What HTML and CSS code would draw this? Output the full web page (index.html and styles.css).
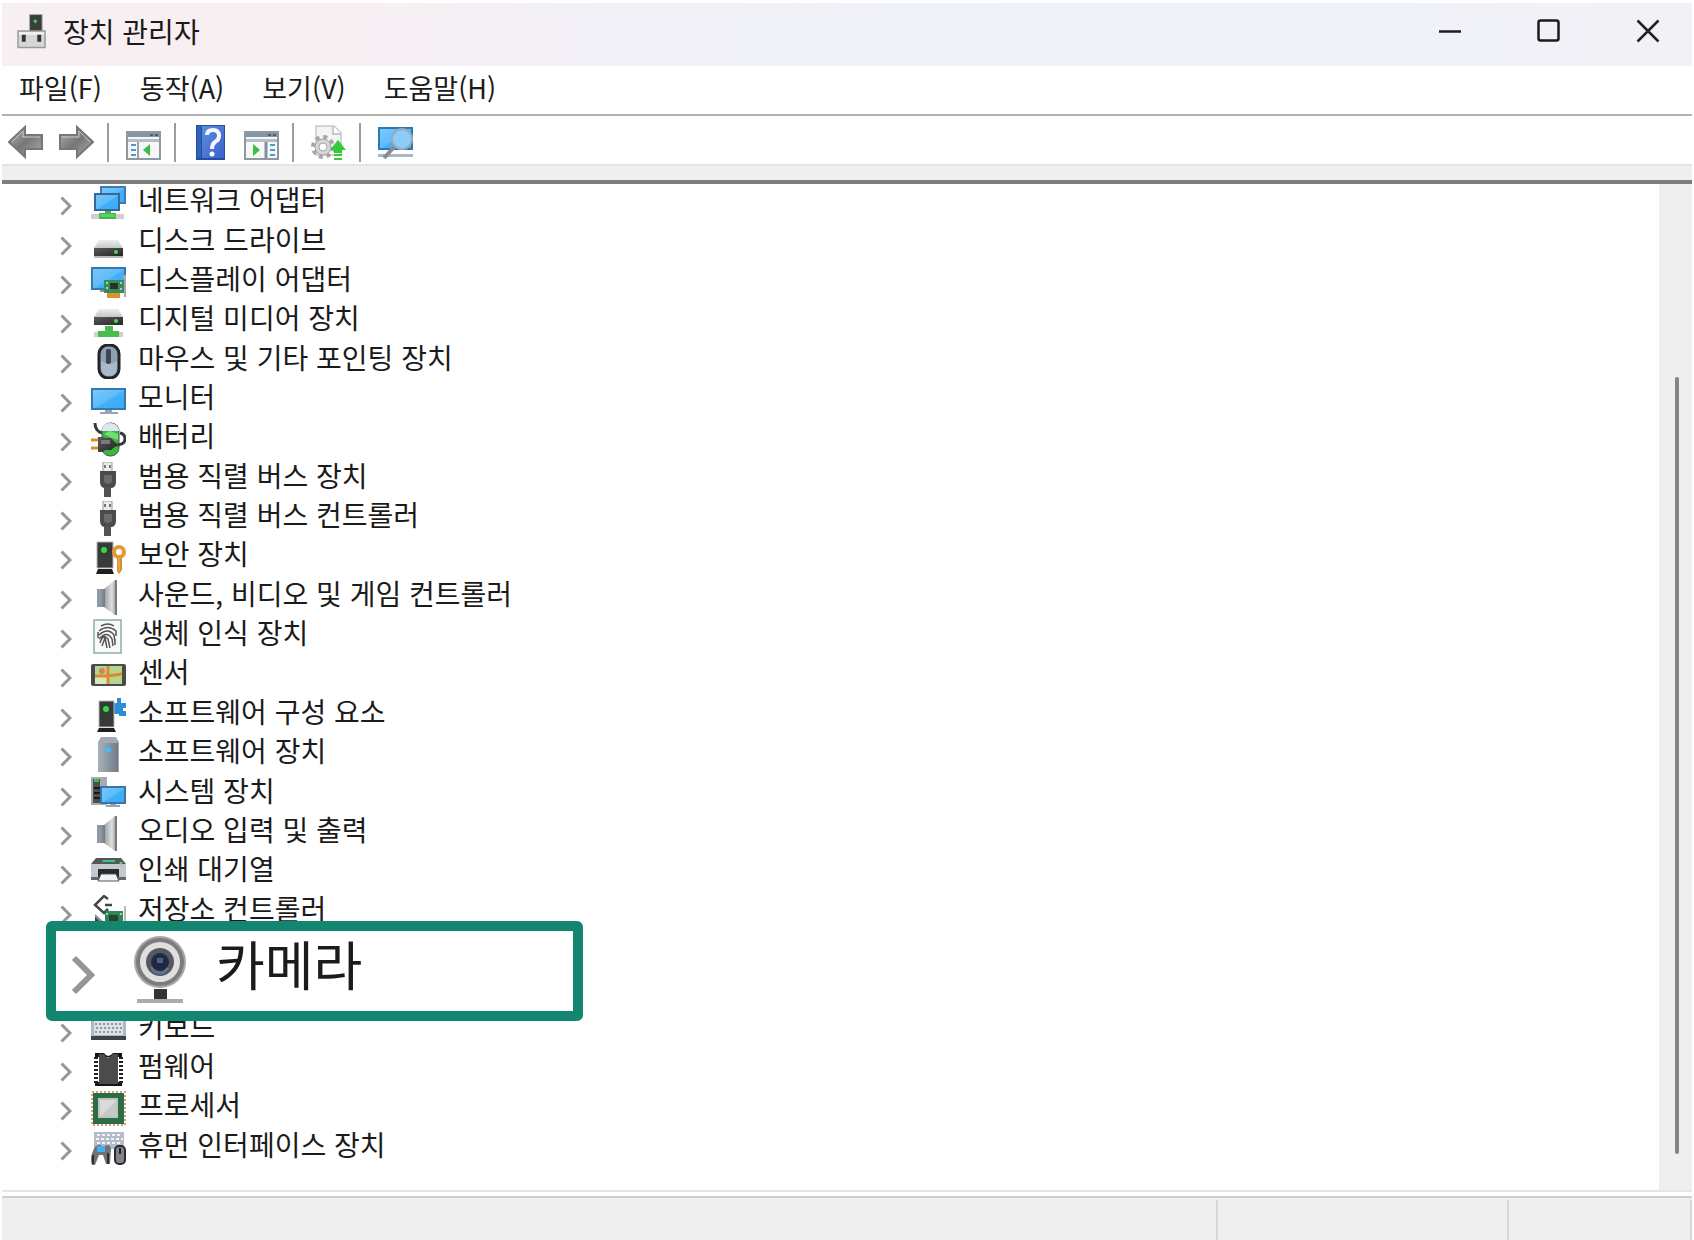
FILE: index.html
```html
<!DOCTYPE html>
<html lang="ko">
<head>
<meta charset="utf-8">
<title>장치 관리자</title>
<link rel="stylesheet" href="styles.css">
</head>
<body>
<svg class="sprite" aria-hidden="true">
  <defs>
    <linearGradient id="screen" x1="0" y1="0" x2="1" y2="1"><stop offset="0" stop-color="#7cc8fb"/><stop offset=".5" stop-color="#5fbcfb"/><stop offset=".55" stop-color="#43aff8"/><stop offset="1" stop-color="#3aa9f5"/></linearGradient>
    <linearGradient id="metal" x1="0" y1="0" x2="0" y2="1"><stop offset="0" stop-color="#eeeeee"/><stop offset="1" stop-color="#c4c6c8"/></linearGradient>
    <linearGradient id="dark" x1="0" y1="0" x2="1" y2="1"><stop offset="0" stop-color="#5a5a5a"/><stop offset="1" stop-color="#262626"/></linearGradient>
    <linearGradient id="steel" x1="0" y1="0" x2="1" y2="0"><stop offset="0" stop-color="#a8b0b8"/><stop offset="1" stop-color="#6f7b87"/></linearGradient>
    <linearGradient id="cone" x1="0" y1="0" x2="1" y2="0"><stop offset="0" stop-color="#9a9ea2"/><stop offset=".6" stop-color="#dedfe0"/><stop offset="1" stop-color="#8c8f92"/></linearGradient>
    <linearGradient id="arrow" x1="0" y1="0" x2="1" y2="1"><stop offset="0" stop-color="#b4b4b4"/><stop offset=".5" stop-color="#777777"/><stop offset="1" stop-color="#b0b0b0"/></linearGradient>
    <linearGradient id="book" x1="0" y1="0" x2="1" y2="1"><stop offset="0" stop-color="#5b8fdd"/><stop offset="1" stop-color="#3c5fce"/></linearGradient>
  </defs>
  <symbol id="chevron" viewBox="0 0 12 20"><path d="M1.500 1.500 10 10 1.500 18.500" fill="none" stroke="#969696" stroke-width="3"/></symbol>

  <symbol id="network" viewBox="0 0 35 35">
    <path d="M0 28h33v5H0z" fill="#cfcfcf"/><path d="M14 24h6v3h5v6H8v-6h6z" fill="#45b84c"/><path d="M9 28h15v3H9z" fill="#5bd05f"/>
    <rect x="10" y="1" width="24" height="16" fill="url(#screen)" stroke="#3b7db3" stroke-width="2"/>
    <rect x="4" y="8" width="24" height="16" fill="url(#screen)" stroke="#32699a" stroke-width="2"/>
  </symbol>
  <symbol id="disk" viewBox="0 0 35 35">
    <path d="M8 14h19l5 8H3z" fill="url(#metal)"/><path d="M3 22h29v8H3z" fill="url(#dark)"/><path d="M3 30h29v2H3z" fill="#b9b9b9"/><circle cx="25" cy="26" r="2" fill="#3fe04a"/>
  </symbol>
  <symbol id="display" viewBox="0 0 35 35">
    <rect x="1" y="3" width="33" height="21" fill="url(#screen)" stroke="#3778ad" stroke-width="2"/>
    <path d="M9 25h6v2H9z" fill="#8196ab"/><path d="M16 28h13v5H16z" fill="#dc922d"/>
    <path d="M13 15h20v13H13z" fill="#3a8a5c"/><path d="M19 18h8v6h-8z" fill="#26332c"/><path d="M15 17h2v2h-2zM15 22h2v2h-2zM29 17h2v2h-2zM29 23h2v2h-2z" fill="#9cd8a8"/>
    <path d="M32 10h3v22h-2V13h-1z" fill="#a7aaab"/>
  </symbol>
  <symbol id="media" viewBox="0 0 35 35">
    <path d="M8 5h19l5 8H3z" fill="url(#metal)"/><path d="M3 13h29v8H3z" fill="url(#dark)"/><circle cx="25" cy="17" r="2" fill="#3fe04a"/>
    <path d="M3 28h29v5H3z" fill="#cfcfcf"/><path d="M14 22h8v5h6v6H7v-6h7z" fill="#49bd4d"/>
  </symbol>
  <symbol id="mouse" viewBox="0 0 35 35">
    <rect x="8" y="1" width="20" height="33" rx="9" fill="#8da1b5" stroke="#242424" stroke-width="3"/><path d="M10 17q8 5 16 0v7q-1 8-8 8t-8-8z" fill="#a8b9c9"/><rect x="15" y="5" width="5" height="15" rx="2" fill="#3d454e"/>
  </symbol>
  <symbol id="monitor" viewBox="0 0 35 35">
    <rect x="1" y="6" width="33" height="20" fill="url(#screen)" stroke="#3478ac" stroke-width="2"/><path d="M14 27h7v2h6v2H9v-2h5z" fill="#93a5b6"/>
  </symbol>
  <symbol id="battery" viewBox="0 0 35 35">
    <path d="M4 1q0 8 7 10" fill="none" stroke="#3a3a3a" stroke-width="3"/>
    <rect x="11" y="1" width="17" height="33" rx="8" fill="#38b63e" stroke="#555" stroke-width="1"/><path d="M11 9q0-8 8-8t9 8z" fill="#dce8f5"/><path d="M13 12l6-3 8 3v6l-8-3z" fill="#76dd72"/>
    <path d="M24 23q10 0 10-6 0-5-5-6" fill="none" stroke="#3a3a3a" stroke-width="3"/>
    <path d="M0 18h8M0 26h8" stroke="#e08c25" stroke-width="3"/><path d="M7 15h5l2 1h6l5 5v3l-5 4h-6l-2 2H7z" fill="url(#dark)"/><path d="M10 18h9v4h-9z" fill="#7a7a7a"/>
  </symbol>
  <symbol id="usb" viewBox="0 0 35 35">
    <rect x="12" y="0" width="9" height="10" fill="#ececec" stroke="#999" stroke-width="1"/><path d="M13 3h2v3h-2zM18 3h2v3h-2z" fill="#777"/>
    <path d="M9 9h16v11q0 5-4 6H13q-4-1-4-6z" fill="#4a4b4c"/><path d="M13 13h8v7q-4 4-8 0z" fill="#6a6b6c"/><path d="M13 25h7v10h-7z" fill="#515253"/>
  </symbol>
  <symbol id="security" viewBox="0 0 35 35">
    <path d="M6 2h16v26H6z" fill="#373b3c" stroke="#b4b4b4" stroke-width="1"/><path d="M7 29h14l2 5H5z" fill="#1f1f1f"/><circle cx="13" cy="10" r="3" fill="#2fdc3b"/>
    <path d="M26 16h5v14l-3 4-2-3z" fill="#d78d32"/><circle cx="28" cy="12" r="5" fill="none" stroke="#e0993c" stroke-width="4"/><path d="M28 18v13" stroke="#f2bb6e" stroke-width="1"/>
  </symbol>
  <symbol id="speaker" viewBox="0 0 35 35">
    <path d="M13 9 24 0h2v35h-2L13 27z" fill="url(#cone)"/><path d="M24 0h2v35h-2z" fill="#747a80"/><path d="M6 9h8v18H6z" fill="url(#steel)"/><path d="M7 9v18" stroke="#7b8691" stroke-width="1"/>
  </symbol>
  <symbol id="finger" viewBox="0 0 35 35">
    <rect x="3" y="1" width="27" height="33" fill="#f8f9f9" stroke="#8fabac" stroke-width="1.500"/>
    <g fill="none" stroke="#555" stroke-width="1.500"><path d="M10 7q7-4 13 0M8 12q9-7 17 0v5M8 16q9-8 15 0l1 7M8 20q8-9 13 0l1 7M9 24q3-10 8-4l2 9M11 27l3-8 2 10M7 13v6M24 20v6"/></g>
  </symbol>
  <symbol id="sensor" viewBox="0 0 35 35">
    <rect x="0" y="6" width="35" height="22" rx="2" fill="#4a4c4b"/><path d="M4 8h27v18H4z" fill="#b5d68f"/><path d="M4 18h12v8H4z" fill="#d8e7bd"/><path d="M4 18h13l14-2M17 8v18" fill="none" stroke="#dc8a35" stroke-width="3"/><circle cx="11" cy="13" r="3" fill="#d98155"/>
  </symbol>
  <symbol id="component" viewBox="0 0 35 35">
    <path d="M23 5h3V0h4v5h5v5h-3v3h3v5h-7v-2h-5z" fill="#2f8dd7"/><path d="M8 3h15v26H8z" fill="#353939" stroke="#b9b9b9" stroke-width="1"/><path d="M8 30h15l2 4H6z" fill="#1e1e1e"/><circle cx="15" cy="11" r="3" fill="#2fdc3b"/>
  </symbol>
  <symbol id="softdevice" viewBox="0 0 35 35">
    <path d="M10 0h15l3 5v30H7V5z" fill="#a2a9b0"/><path d="M8 6h19v29H8z" fill="url(#steel)"/><circle cx="17" cy="13" r="3" fill="#48b9fb"/>
  </symbol>
  <symbol id="system" viewBox="0 0 35 35">
    <path d="M0 0h16v28H0z" fill="#a8acb0"/><path d="M2 2h7v24H2z" fill="#4d5052"/><path d="M3 2h5v3H3z" fill="#36bf40"/><path d="M3 11h6M3 16h6M3 21h6" stroke="#181818" stroke-width="2"/>
    <rect x="10" y="10" width="24" height="16" fill="url(#screen)" stroke="#3876a7" stroke-width="2"/><path d="M19 27h6v1h4v2H15v-2h4z" fill="#91a4b5"/>
  </symbol>
  <symbol id="printer" viewBox="0 0 35 35">
    <path d="M5 3h25l5 6H0z" fill="#50585a"/><path d="M12 5h12v2H11z" fill="#36c777"/><path d="M0 9h35v15H0z" fill="#c4c9ce"/><path d="M0 22h35v3H0z" fill="#62676b"/><circle cx="30" cy="8" r="1.500" fill="#40e04b"/>
    <path d="M7 14h21v8H7z" fill="#27292b"/><path d="M10 19h15l3 7H7z" fill="#f3f3f3" stroke="#555" stroke-width="1"/>
  </symbol>
  <symbol id="storage" viewBox="0 0 35 35">
    <path d="M4 19l9 8h9v8H4z" fill="#8d8f90"/><path d="M4 22l8 8H4z" fill="#3c3c3c"/>
    <path d="M17 4 13 1 4 10l9 8 4-4M14 10h7" fill="none" stroke="#464646" stroke-width="2.500"/>
    <path d="M14 16h18v16H14z" fill="#2f8757"/><path d="M18 20h9v9h-9z" fill="#26442f"/><path d="M15 18h2v2h-2zM29 18h2v2h-2z" fill="#9cd8a8"/><path d="M33 11h2v22h-2z" fill="#b8b8b8"/>
  </symbol>
  <symbol id="keyboard" viewBox="0 0 35 35">
    <path d="M0 5h35v20H0z" fill="#aeb9c4"/><path d="M3 8h29v14H3z" fill="#dce2e7"/><path d="M4 11h27M5 15h26M4 19h27" stroke="#8d9aa6" stroke-width="2" stroke-dasharray="2 2"/><path d="M0 23h35v4H0z" fill="#3f4347"/>
  </symbol>
  <symbol id="firmware" viewBox="0 0 35 35">
    <path d="M4 1h9q4 6 9 0h9v4H4zM4 30h27v4H4z" fill="#151515"/><path d="M5 5v26M30 5v26" stroke="#222" stroke-width="4" stroke-dasharray="2 2"/><path d="M8 2h5q4 7 9 0h5v30H8z" fill="#4b4b4b"/>
  </symbol>
  <symbol id="processor" viewBox="0 0 35 35">
    <rect x="1" y="1" width="33" height="33" fill="none" stroke="#dba069" stroke-width="2" stroke-dasharray="2 2"/><path d="M2 2h31v31H2z" fill="#2d6c49"/><rect x="8" y="8" width="18" height="18" fill="#dadada" stroke="#b9c8bd" stroke-width="2"/><path d="M25 10v15H10z" fill="#c8c8c8"/>
  </symbol>
  <symbol id="hid" viewBox="0 0 35 35">
    <path d="M3 1h30v17H3z" fill="#b3bdc7"/><path d="M6 4h25M5 8h27M6 12h25" stroke="#f3f5f7" stroke-width="2" stroke-dasharray="3 2"/>
    <path d="M4 16q4-4 7-1h3q5-3 6 3l-1 15h-4l-3-9H8l-4 10H1q-3-8 3-18z" fill="#6f7377"/><path d="M6 15h8v6H6z" fill="#44afef"/><path d="M2 24v9M17 22v11" stroke="#2d2d2d" stroke-width="2"/>
    <rect x="24" y="15" width="10" height="18" rx="4" fill="#7f858b" stroke="#2b2b2b" stroke-width="2"/><path d="M29 17v6" stroke="#222" stroke-width="2"/>
  </symbol>
  <symbol id="camera" viewBox="0 0 54 70">
    <circle cx="27" cy="28" r="26" fill="#a8a8a8"/><circle cx="27" cy="28" r="24" fill="#7c7c7c"/><circle cx="27" cy="28" r="20" fill="#dfdfdf"/><circle cx="27" cy="28" r="14" fill="#565a60"/><circle cx="27" cy="28" r="9" fill="#23283a"/>
    <path d="M24 24h6v5h-6z" fill="#41629f"/><path d="M18 33l4 5 8 1 5-5" fill="none" stroke="#5979b8" stroke-width="2"/><path d="M21 55h13v10H21z" fill="#343434"/><path d="M4 65h46v4H4z" fill="#ababab"/>
  </symbol>
</svg>

<div class="window">
  <header class="titlebar">
    <svg class="app-icon" viewBox="0 0 30 36" aria-hidden="true"><path d="M13 1h13v18H13z" fill="#3a3d3d" stroke="#aaa" stroke-width="1"/><path d="M19 6v4M17 8h4" stroke="#46d653" stroke-width="1.500"/><path d="M1 18h28v17H1z" fill="#d5d6d7" stroke="#999" stroke-width="1.500"/><path d="M2 19h26v3H2z" fill="#efefef"/><path d="M5 22h4v7H5zM21 22h4v7h-4z" fill="#333"/></svg>
    <h1 class="title">장치 관리자</h1>
    <div class="window-controls">
      <button class="window-button" type="button" aria-label="최소화"><svg viewBox="0 0 24 24"><path d="M1 12.500h22" stroke="#1c1c1c" stroke-width="2.500"/></svg></button>
      <button class="window-button" type="button" aria-label="최대화"><svg viewBox="0 0 24 24"><rect x="1.500" y="1.500" width="20" height="20" rx="2" fill="none" stroke="#1c1c1c" stroke-width="2.500"/></svg></button>
      <button class="window-button" type="button" aria-label="닫기"><svg viewBox="0 0 24 24"><path d="M1.500 1.500l21 21M22.500 1.500l-21 21" stroke="#222" stroke-width="2.500"/></svg></button>
    </div>
  </header>

  <nav class="menubar">
    <button class="menu" type="button">파일(F)</button>
    <button class="menu" type="button">동작(A)</button>
    <button class="menu" type="button">보기(V)</button>
    <button class="menu" type="button">도움말(H)</button>
  </nav>

  <div class="toolbar" role="toolbar">
    <button class="tool" type="button" aria-label="뒤로"><svg viewBox="0 0 35 35"><path d="M1 17 17 2v8h17v14H17v8z" fill="url(#arrow)" stroke="#777" stroke-width="2"/><path d="M4 17 15 6v6h17" fill="none" stroke="#c8c8c8" stroke-width="1"/></svg></button>
    <button class="tool" type="button" aria-label="앞으로"><svg viewBox="0 0 35 35"><path d="M34 17 18 2v8H1v14h17v8z" fill="url(#arrow)" stroke="#777" stroke-width="2"/><path d="M31 17 20 6v6H3" fill="none" stroke="#c8c8c8" stroke-width="1"/></svg></button>
    <span class="divider"></span>
    <button class="tool" type="button" aria-label="콘솔 트리 표시"><svg viewBox="0 0 35 35"><rect x="1" y="7" width="33" height="27" fill="#f7f7f7" stroke="#8e989f" stroke-width="2"/><path d="M2 8h31v4H2z" fill="#8695a4"/><path d="M24 9h3v2h-3zM29 9h3v2h-3z" fill="#4c5f75"/><path d="M2 14h31v3H2z" fill="#b4bec7"/><path d="M12 17v16" stroke="#98a2aa" stroke-width="2"/><path d="M5 20h5M5 25h5M5 30h5" stroke="#4a9ad4" stroke-width="2"/><path d="M17 25l7-6v12z" fill="#3fbc47"/></svg></button>
    <span class="divider"></span>
    <button class="tool" type="button" aria-label="도움말"><svg viewBox="0 0 35 35"><path d="M3 0h29v35H3z" fill="#244f9f"/><path d="M9 1h22v32H9z" fill="url(#book)"/><path d="M4 1h4v32H4z" fill="#2e63b9"/><path d="M14 10q0-5 6-5 6 0 6 6 0 4-4 6-3 2-3 7" fill="none" stroke="#f5f7fc" stroke-width="4"/><circle cx="19" cy="29" r="2.500" fill="#fff"/></svg></button>
    <button class="tool" type="button" aria-label="작업 창 표시"><svg viewBox="0 0 35 35"><rect x="1" y="7" width="33" height="27" fill="#f7f7f7" stroke="#8e989f" stroke-width="2"/><path d="M2 8h31v4H2z" fill="#8695a4"/><path d="M24 9h3v2h-3zM29 9h3v2h-3z" fill="#4c5f75"/><path d="M2 14h31v3H2z" fill="#b4bec7"/><path d="M22 17v16" stroke="#7c91a6" stroke-width="3"/><path d="M26 20h5M26 25h5M26 30h5" stroke="#4a9ad4" stroke-width="2"/><path d="M16 25l-7-6v12z" fill="#3fbc47"/></svg></button>
    <span class="divider"></span>
    <button class="tool" type="button" aria-label="드라이버 업데이트"><svg viewBox="0 0 35 35"><path d="M5 1h18l7 7v22H5z" fill="#f4f4f4" stroke="#c9c9c9" stroke-width="1.500"/><path d="M22 1v8h8" fill="#fff" stroke="#b9b9b9" stroke-width="1.500"/><circle cx="12" cy="22" r="10" fill="none" stroke="#a6a6a6" stroke-width="4" stroke-dasharray="4 3.850"/><circle cx="12" cy="22" r="8" fill="#d6d6d6" stroke="#a4a4a4" stroke-width="1"/><circle cx="12" cy="22" r="4" fill="#fff" stroke="#a4a4a4" stroke-width="1"/><path d="M27 15l8 10h-4v3h-8v-3h-4zM23 29h8v2h-8zM23 33h8v2h-8z" fill="#33cb37"/></svg></button>
    <span class="divider"></span>
    <button class="tool" type="button" aria-label="하드웨어 변경 사항 검색"><svg viewBox="0 0 35 35"><path d="M0 29h35v3H0z" fill="#a8b6cd"/><rect x="1" y="3" width="33" height="21" fill="url(#screen)" stroke="#2c78b2" stroke-width="2"/><path d="M17 21 6 33" stroke="#858c92" stroke-width="4"/><circle cx="24" cy="14" r="10" fill="#8cccf9" stroke="#9caab7" stroke-width="2"/></svg></button>
  </div>

  <main class="content">
    <ul class="tree">
      <li class="row"><button class="toggle" type="button" aria-label="확장"><svg><use href="#chevron"/></svg></button><svg class="icon"><use href="#network"/></svg><span class="label">네트워크 어댑터</span></li>
      <li class="row"><button class="toggle" type="button" aria-label="확장"><svg><use href="#chevron"/></svg></button><svg class="icon"><use href="#disk"/></svg><span class="label">디스크 드라이브</span></li>
      <li class="row"><button class="toggle" type="button" aria-label="확장"><svg><use href="#chevron"/></svg></button><svg class="icon"><use href="#display"/></svg><span class="label">디스플레이 어댑터</span></li>
      <li class="row"><button class="toggle" type="button" aria-label="확장"><svg><use href="#chevron"/></svg></button><svg class="icon"><use href="#media"/></svg><span class="label">디지털 미디어 장치</span></li>
      <li class="row"><button class="toggle" type="button" aria-label="확장"><svg><use href="#chevron"/></svg></button><svg class="icon"><use href="#mouse"/></svg><span class="label">마우스 및 기타 포인팅 장치</span></li>
      <li class="row"><button class="toggle" type="button" aria-label="확장"><svg><use href="#chevron"/></svg></button><svg class="icon"><use href="#monitor"/></svg><span class="label">모니터</span></li>
      <li class="row"><button class="toggle" type="button" aria-label="확장"><svg><use href="#chevron"/></svg></button><svg class="icon"><use href="#battery"/></svg><span class="label">배터리</span></li>
      <li class="row"><button class="toggle" type="button" aria-label="확장"><svg><use href="#chevron"/></svg></button><svg class="icon"><use href="#usb"/></svg><span class="label">범용 직렬 버스 장치</span></li>
      <li class="row"><button class="toggle" type="button" aria-label="확장"><svg><use href="#chevron"/></svg></button><svg class="icon"><use href="#usb"/></svg><span class="label">범용 직렬 버스 컨트롤러</span></li>
      <li class="row"><button class="toggle" type="button" aria-label="확장"><svg><use href="#chevron"/></svg></button><svg class="icon"><use href="#security"/></svg><span class="label">보안 장치</span></li>
      <li class="row"><button class="toggle" type="button" aria-label="확장"><svg><use href="#chevron"/></svg></button><svg class="icon"><use href="#speaker"/></svg><span class="label">사운드, 비디오 및 게임 컨트롤러</span></li>
      <li class="row"><button class="toggle" type="button" aria-label="확장"><svg><use href="#chevron"/></svg></button><svg class="icon"><use href="#finger"/></svg><span class="label">생체 인식 장치</span></li>
      <li class="row"><button class="toggle" type="button" aria-label="확장"><svg><use href="#chevron"/></svg></button><svg class="icon"><use href="#sensor"/></svg><span class="label">센서</span></li>
      <li class="row"><button class="toggle" type="button" aria-label="확장"><svg><use href="#chevron"/></svg></button><svg class="icon"><use href="#component"/></svg><span class="label">소프트웨어 구성 요소</span></li>
      <li class="row"><button class="toggle" type="button" aria-label="확장"><svg><use href="#chevron"/></svg></button><svg class="icon"><use href="#softdevice"/></svg><span class="label">소프트웨어 장치</span></li>
      <li class="row"><button class="toggle" type="button" aria-label="확장"><svg><use href="#chevron"/></svg></button><svg class="icon"><use href="#system"/></svg><span class="label">시스템 장치</span></li>
      <li class="row"><button class="toggle" type="button" aria-label="확장"><svg><use href="#chevron"/></svg></button><svg class="icon"><use href="#speaker"/></svg><span class="label">오디오 입력 및 출력</span></li>
      <li class="row"><button class="toggle" type="button" aria-label="확장"><svg><use href="#chevron"/></svg></button><svg class="icon"><use href="#printer"/></svg><span class="label">인쇄 대기열</span></li>
      <li class="row"><button class="toggle" type="button" aria-label="확장"><svg><use href="#chevron"/></svg></button><svg class="icon"><use href="#storage"/></svg><span class="label">저장소 컨트롤러</span></li>
      <li class="callout"><button class="toggle" type="button" aria-label="확장"><svg><use href="#chevron"/></svg></button><svg class="icon"><use href="#camera"/></svg><span class="label">카메라</span></li>
      <li class="row"><button class="toggle" type="button" aria-label="확장"><svg><use href="#chevron"/></svg></button><svg class="icon"><use href="#keyboard"/></svg><span class="label">키보드</span></li>
      <li class="row"><button class="toggle" type="button" aria-label="확장"><svg><use href="#chevron"/></svg></button><svg class="icon"><use href="#firmware"/></svg><span class="label">펌웨어</span></li>
      <li class="row"><button class="toggle" type="button" aria-label="확장"><svg><use href="#chevron"/></svg></button><svg class="icon"><use href="#processor"/></svg><span class="label">프로세서</span></li>
      <li class="row"><button class="toggle" type="button" aria-label="확장"><svg><use href="#chevron"/></svg></button><svg class="icon"><use href="#hid"/></svg><span class="label">휴먼 인터페이스 장치</span></li>
    </ul>
    <div class="scrollbar"><div class="thumb"></div></div>
  </main>

  <footer class="statusbar"><span class="status-main"></span><span class="status-mid"></span><span class="status-end"></span></footer>
</div>
</body>
</html>
```
FILE: styles.css
```css
* {
  box-sizing: border-box;
}

body {
  margin: 0;
  background: #fff;
  color: #1b1b1b;
  font-family: "Noto Sans CJK KR", "Noto Sans", sans-serif;
}

button {
  padding: 0;
  border: 0;
  background: none;
  color: inherit;
  font: inherit;
}

svg {
  display: block;
}

.sprite {
  position: absolute;
  width: 0;
  height: 0;
}

.window {
  display: flex;
  flex-direction: column;
  min-height: 100vh;
  padding: 3px 2px 0;
}

/* Title bar */
.titlebar {
  display: flex;
  align-items: center;
  height: 63px;
  padding: 0 0 7px 15px;
  background: linear-gradient(90deg, #f8eff3 0%, #f8eff3 20%, #f2f1f7 35%, #eff2f9 60%, #f0f2f9 83%, #f3f1f6 100%);
}

.app-icon {
  width: 29px;
  height: 36px;
}

.title {
  margin: 0 auto 0 17px;
  font-size: 28px;
  font-weight: 400;
  line-height: 40px;
}

.window-controls {
  display: flex;
  gap: 11px;
}

.window-button {
  display: grid;
  place-items: center;
  width: 88px;
  height: 56px;
}

.window-button svg {
  width: 24px;
  height: 24px;
}

/* Menus */
.menubar {
  display: flex;
  gap: 38px;
  height: 50px;
  padding: 3px 17px 7px;
  border-bottom: 2px solid #b2b2b2;
  font-size: 27px;
  line-height: 38px;
}

/* Toolbar */
.toolbar {
  display: flex;
  align-items: center;
  gap: 16px;
  height: 50px;
  padding: 4px 6px 0;
  border-bottom: 2px solid #e4e4e4;
}

.tool svg {
  width: 35px;
  height: 35px;
}

.divider {
  width: 2px;
  height: 39px;
  margin: 0 1px 0 -3px;
  background: #9c9c9c;
}

/* Device list */
.content {
  display: flex;
  flex: 1;
  margin-top: 14px;
  border-top: 4px solid #7d7d7d;
  box-shadow: 0 -14px 0 #efefef;
}

.tree {
  display: grid;
  flex: 1;
  grid-template-rows: repeat(25, 1fr);
  margin: 0;
  padding: 0 0 22px;
  list-style: none;
}

.row {
  display: flex;
  align-items: center;
  min-height: 0;
  padding-left: 58px;
}

.toggle svg {
  width: 12px;
  height: 20px;
}

.row .toggle {
  padding-top: 5px;
}

.row .icon {
  width: 35px;
  height: 35px;
  margin: 0 12px 0 19px;
}

.row .label {
  padding-bottom: 8px;
  font-size: 28px;
  line-height: 31px;
}

/* Enlarged entry lying over the rows around it */
.callout {
  z-index: 1;
  display: flex;
  grid-row: span 2;
  align-items: center;
  width: 537px;
  margin: -11px 0 -10px 44px;
  padding-left: 15px;
  border: 10px solid #13866f;
  border-radius: 6px;
  background: #fff;
}

.callout .toggle {
  padding-top: 8px;
}

.callout .toggle svg {
  width: 24px;
  height: 40px;
}

.callout .icon {
  width: 54px;
  height: 70px;
  margin: 0 29px 4px 38px;
}

.callout .label {
  padding-bottom: 16px;
  font-size: 53px;
  line-height: 60px;
}

.scrollbar {
  width: 33px;
  padding: 193px 13px 36px 16px;
  background: #efefef;
}

.thumb {
  height: 100%;
  border-radius: 2px;
  background: #858585;
}

/* Status bar */
.statusbar {
  display: flex;
  height: 50px;
  padding-top: 4px;
  border-top: 2px solid #e6e6e6;
  background: linear-gradient(#fff 0 4px, #cfcfcf 4px 6px, #efefef 6px);
}

.statusbar span {
  margin-top: 4px;
  border-right: 2px solid #d6d6d6;
}

.status-main {
  flex: 1218;
}

.status-mid {
  flex: 290;
}

.status-end {
  flex: 182;
}
```
